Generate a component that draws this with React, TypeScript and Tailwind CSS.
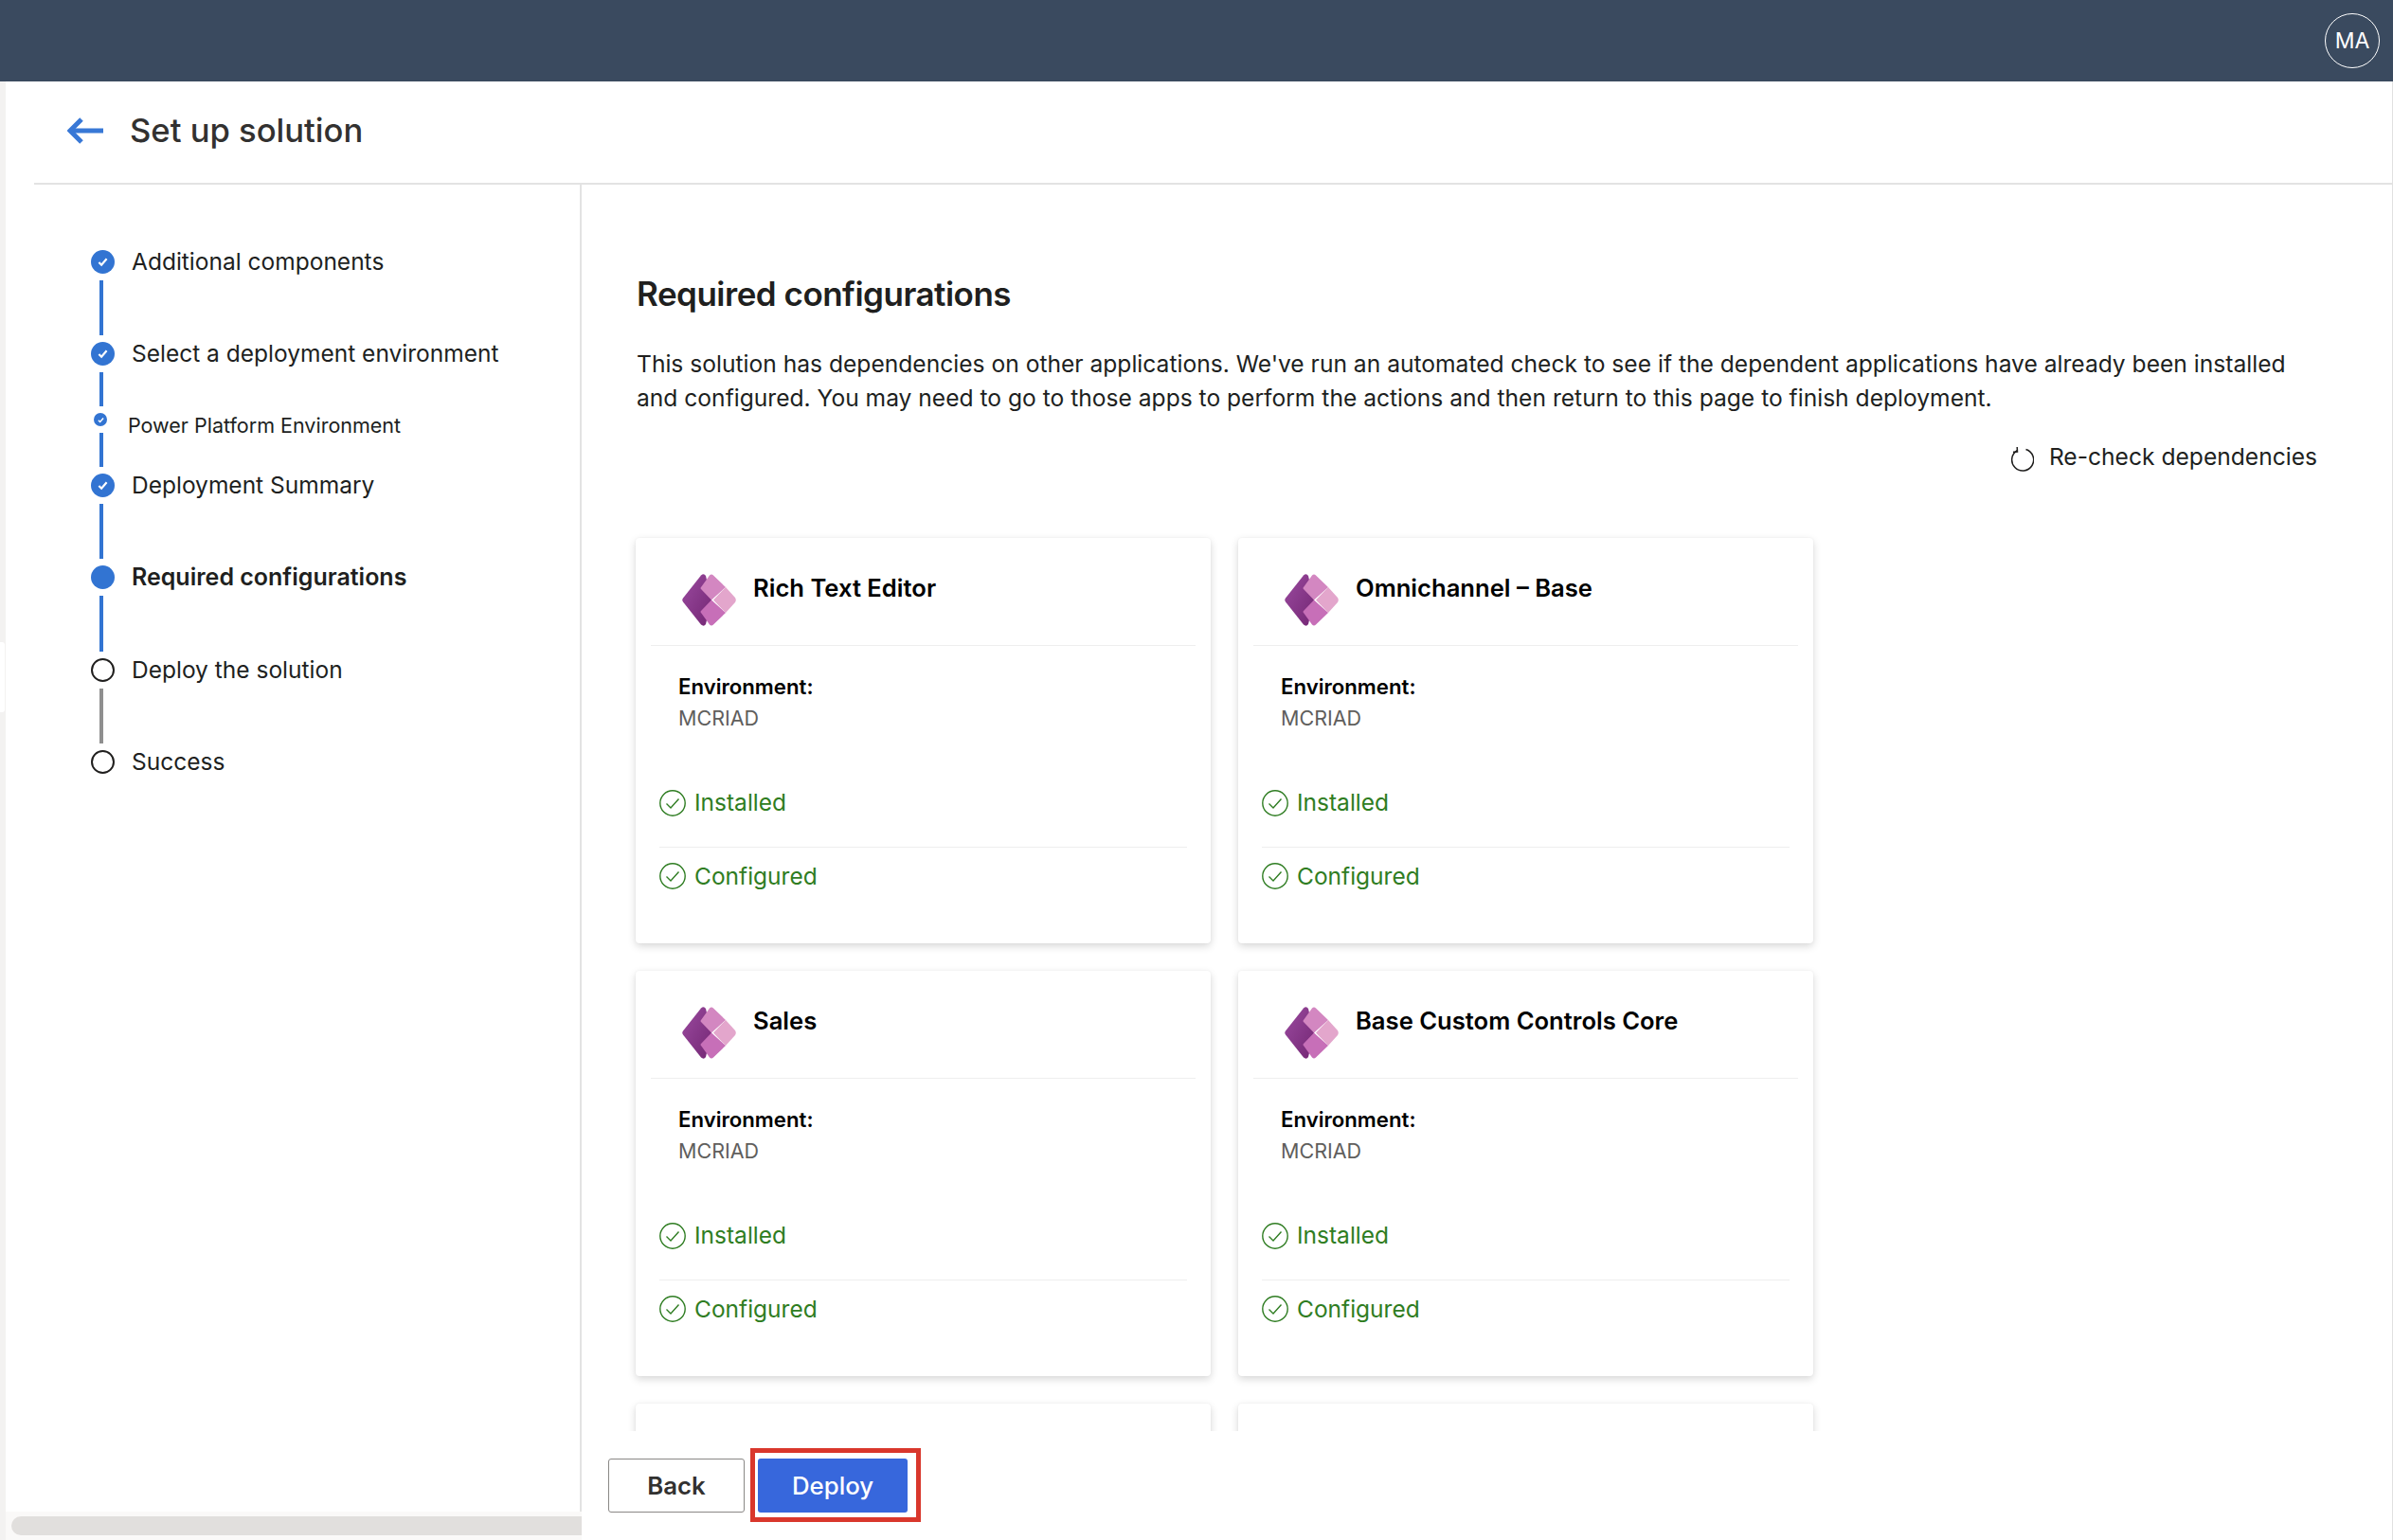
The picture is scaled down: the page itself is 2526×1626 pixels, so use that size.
const font = { fontFamily: "Inter, 'Noto Sans', sans-serif" };

const products = ["Rich Text Editor", "Omnichannel – Base", "Sales", "Base Custom Controls Core"];

function PowerAppsLogo() {
  return (
    <svg viewBox="0 0 57 55" className="w-[57px] h-[55px] shrink-0">
      <defs>
        <linearGradient id="pa-dark" x1="0" y1="0" x2="1" y2="1">
          <stop offset="0" stopColor="#9a4a9f" />
          <stop offset="1" stopColor="#742774" />
        </linearGradient>
      </defs>
      <path d="M1 25.5 L20 1.5 Q23 -1 25 2 L31 27.5 L25 53 Q23 56 20 53.5 L1 29.5 Q-.5 27.5 1 25.5 Z" fill="url(#pa-dark)" />
      <path d="M20 14 L29 1.5 Q31 -.5 33 1.5 L46 14 L31 27.5 L20 16 Q19 15 20 14 Z" fill="#d387c1" />
      <path d="M33 27.5 L46 14 L56 25 Q57.5 27.5 56 30 L46 41 Z" fill="#e3a6cc" />
      <path d="M20 39 L31 27.5 L46 41 L33 53.5 Q31 55.5 29 53.5 L20 41 Q19 40 20 39 Z" fill="#c76fb8" />
    </svg>
  );
}

function CheckCircle() {
  return (
    <svg viewBox="0 0 28 28" className="w-[28px] h-[28px] shrink-0" fill="none" stroke="#2f7d22">
      <circle cx="14" cy="14" r="13.2" strokeWidth="1.4" />
      <path d="M7.5 14.5 L12 19 L20.5 9.5" strokeWidth="1.4" />
    </svg>
  );
}

function StepDot({ state, small }: { state: "done" | "active" | "todo"; small?: boolean }) {
  if (state === "todo") {
    return <div className="w-[25px] h-[25px] rounded-full border-2 border-[#201f1e] bg-white shrink-0" />;
  }
  if (state === "active") {
    return <div className="w-[25px] h-[25px] rounded-full bg-[#3274d2] shrink-0" />;
  }
  return (
    <div className={small ? "w-[14px] h-[14px] rounded-full bg-[#3274d2] shrink-0 flex items-center justify-center" : "w-[25px] h-[25px] rounded-full bg-[#3274d2] shrink-0 flex items-center justify-center"}>
      <svg viewBox="0 0 12 12" className={small ? "w-[7px] h-[7px]" : "w-[11px] h-[11px]"} fill="none" stroke="white" strokeWidth="2.4">
        <path d="M1.5 6.5 L4.5 9.5 L10.5 2.5" />
      </svg>
    </div>
  );
}

function Connector({ height, gray }: { height: string; gray?: boolean }) {
  return <div className={`w-[4px] ml-[9px] my-[7px] ${height} ${gray ? "bg-[#8f8f8f]" : "bg-[#3274d2]"}`} />;
}

function Step({ label, state, bold }: { label: string; state: "done" | "active" | "todo"; bold?: boolean }) {
  return (
    <div className="flex items-center gap-[18px] h-[25px]">
      <StepDot state={state} />
      <span className={`whitespace-nowrap text-[#201f1e] ${bold ? "text-[25px] font-semibold" : "text-[24.5px]"}`}>{label}</span>
    </div>
  );
}

function ProductCard({ name }: { name: string }) {
  return (
    <div className="h-[428px] bg-white rounded-[4px] px-[16px] shadow-[0_3px_8px_rgba(0,0,0,0.16),0_0_2px_rgba(0,0,0,0.06)]">
      <div className="h-[114px] border-b border-[#eeeeee] flex items-start pl-[33px] pt-[38px] gap-[18px]">
        <PowerAppsLogo />
        <span className="text-[25.6px] font-semibold text-black -mt-[4px]">{name}</span>
      </div>
      <div className="pl-[29px] pt-[28px] h-[134px]">
        <div className="text-[22.2px] font-semibold text-black leading-[30px]">Environment:</div>
        <div className="text-[21.5px] text-[#605e5c] leading-[30px] mt-[3px]">MCRIAD</div>
      </div>
      <div className="mx-[9px] flex items-center gap-[9px] h-[80px] pb-[14px] border-b border-[#eeeeee] text-[24.5px] text-[#2f7d22] -mt-[1px]">
        <CheckCircle />
        Installed
      </div>
      <div className="mx-[9px] flex items-center gap-[9px] h-[60px] text-[24.5px] text-[#2f7d22]">
        <CheckCircle />
        Configured
      </div>
    </div>
  );
}

export default function App() {
  return (
    <div className="w-[2526px] h-[1626px] flex flex-col overflow-hidden bg-white" style={font}>
      <header className="h-[86px] shrink-0 bg-[#3a4a5f] flex items-center justify-end pr-[14px]">
        <div className="w-[58px] h-[58px] rounded-full border border-white text-white text-[23px] flex items-center justify-center">
          MA
        </div>
      </header>

      <div className="flex-1 min-h-0 flex">
        <div className="w-[6px] shrink-0 bg-[#f3f2f1] relative">
          <div className="absolute left-0 top-[592px] w-[5px] h-[74px] bg-white rounded-r-[3px]" />
        </div>

        <div className="flex-1 min-w-0 flex flex-col border-r border-[#e1e1e1]">
          <div className="ml-[30px] h-[109px] shrink-0 border-b-2 border-[#e3e3e3] flex items-center pl-[35px] pb-[3px] gap-[28px]">
            <svg viewBox="0 0 38 28" className="w-[38px] h-[28px]" fill="none" stroke="#3878d6" strokeWidth="5">
              <path d="M38 14 L3 14" />
              <path d="M15 2 L3 14 L15 26" />
            </svg>
            <h1 className="text-[34.6px] font-medium text-[#323130]">Set up solution</h1>
          </div>

          <div className="flex-1 min-h-0 flex">
            <div className="w-[608px] shrink-0 flex flex-col">
              <div className="flex-1 min-h-0 border-r-2 border-[#e3e3e3] pl-[90px] pt-[69px]">
                <Step label="Additional components" state="done" />
                <Connector height="h-[58px]" />
                <Step label="Select a deployment environment" state="done" />
                <Connector height="h-[36px]" />
                <div className="flex items-start h-[14px] pl-[3px]">
                  <StepDot state="done" small />
                  <span className="ml-[22px] mt-[-6px] pt-[4px] text-[21.5px] leading-[30px] whitespace-nowrap text-[#201f1e]">
                    Power Platform Environment
                  </span>
                </div>
                <Connector height="h-[36px]" />
                <Step label="Deployment Summary" state="done" />
                <Connector height="h-[58px]" />
                <Step label="Required configurations" state="active" bold />
                <Connector height="h-[59px]" />
                <Step label="Deploy the solution" state="todo" />
                <Connector height="h-[58px]" gray />
                <Step label="Success" state="todo" />
              </div>
              <div className="h-[30px] shrink-0 bg-[#faf9f8] pl-[6px] pt-[5px]">
                <div className="h-[20px] bg-[#e1dfdd] rounded-l-[10px]" />
              </div>
            </div>

            <div className="flex-1 min-w-0 flex flex-col">
              <div className="h-[1316px] shrink-0 overflow-hidden pl-[58px] pt-[93px]">
                <h2 className="text-[35px] font-semibold text-[#201f1e] leading-[44px] tracking-[-0.5px]">Required configurations</h2>
                <p className="mt-[34px] w-[1760px] text-[24.6px] leading-[36px] text-[#201f1e]">
                  This solution has dependencies on other applications. We've run an automated check to see if the dependent applications have already been installed and configured. You may need to go to those apps to perform the actions and then return to this page to finish deployment.
                </p>
                <div className="mt-[26px] w-[1774px] flex justify-end items-center gap-[16px] text-[24.6px] text-[#201f1e] h-[36px]">
                  <svg viewBox="0 0 26 26" className="w-[26px] h-[26px] mt-[6px]" fill="none" stroke="#201f1e" strokeWidth="1.5">
                    <path d="M8.5 3.5 A11.5 11.5 0 1 0 17.5 2.5" />
                    <path d="M8.2 0 L8.5 5 L4 5.2" />
                  </svg>
                  Re-check dependencies
                </div>
                <div className="mt-[68px] -ml-[1px] grid grid-cols-[607px_607px] gap-x-[29px] gap-y-[29px]">
                  {products.map((p) => (
                    <ProductCard key={p} name={p} />
                  ))}
                  <div className="h-[428px] bg-white rounded-[4px] shadow-[0_3px_8px_rgba(0,0,0,0.16),0_0_2px_rgba(0,0,0,0.06)]" />
                  <div className="h-[428px] bg-white rounded-[4px] shadow-[0_3px_8px_rgba(0,0,0,0.16),0_0_2px_rgba(0,0,0,0.06)]" />
                </div>
              </div>
              <div className="flex-1 flex items-start pl-[28px] pt-[18px] gap-[6px]">
                <button className="mt-[11px] w-[144px] h-[57px] pt-[2px] rounded-[3px] border border-[#8a8886] bg-white text-[25.8px] font-semibold text-[#323130]">
                  Back
                </button>
                <div className="border-[5px] border-[#d9372c] pl-[3px] pr-[9px] pt-[6px] pb-[5px]">
                  <button className="block w-[158px] h-[57px] pt-[2px] rounded-[3px] bg-[#3767dc] text-[25.8px] font-medium text-white">
                    Deploy
                  </button>
                </div>
              </div>
            </div>
          </div>
        </div>
      </div>
    </div>
  );
}
